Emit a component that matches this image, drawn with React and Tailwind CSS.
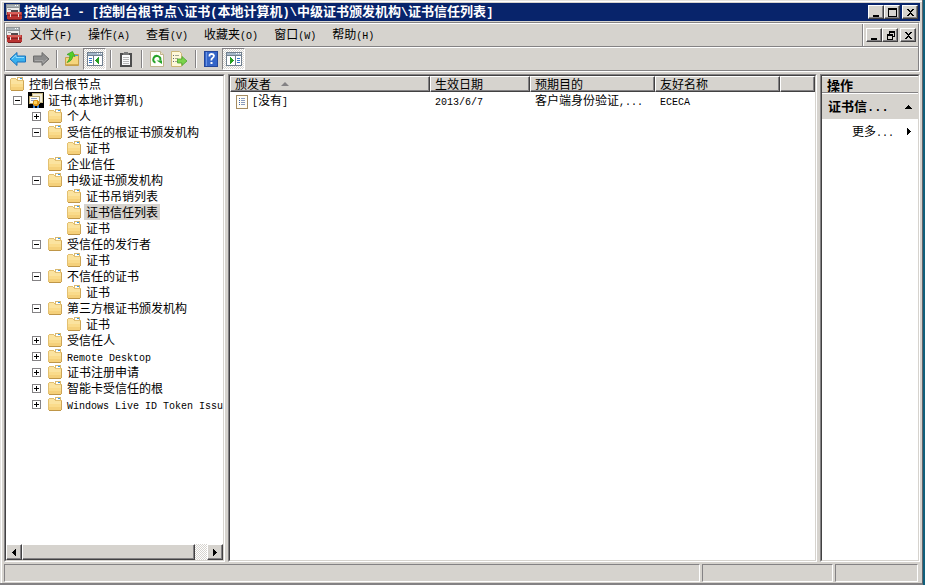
import React from "react";

// Latin runs are set in a half-width face so that two letters take one ideograph.
function Text({ children, latin = "text-[10px]" }) {
  const parts = children.split(/([\x20-\x7e]+)/).filter(Boolean);
  return parts.map((part, i) =>
    /^[\x20-\x7e]/.test(part) ? (
      <span key={i} className={`font-['Liberation_Mono',monospace] whitespace-pre ${latin}`}>
        {part}
      </span>
    ) : (
      <React.Fragment key={i}>{part}</React.Fragment>
    )
  );
}

function ConsoleIcon() {
  return (
    <svg width="16" height="16" viewBox="0 0 16 16" shapeRendering="crispEdges" aria-hidden="true">
      <rect x="0" y="0" width="14" height="11" fill="#8f9497" />
      <rect x="1" y="1" width="12" height="2" fill="#a9b2b7" />
      <rect x="9" y="1" width="1" height="1" fill="#fff" />
      <rect x="11" y="1" width="1" height="1" fill="#fff" />
      <rect x="1" y="4" width="12" height="6" fill="#eceded" />
      <rect x="2" y="5" width="3" height="1" fill="#a4a8ab" />
      <path d="M5 6h7v3h-2v-1h-3v1h-2z" fill="#55484c" />
      <rect x="1" y="8" width="15" height="7" fill="#b93432" />
      <rect x="2" y="8" width="13" height="2" fill="#d8605a" />
      <path d="M6 7h5v1h-5z" fill="#55484c" />
      <rect x="1" y="11" width="15" height="1" fill="#8a2426" />
      <rect x="4" y="10" width="1" height="3" fill="#e9dede" />
      <rect x="12" y="10" width="1" height="3" fill="#e9dede" />
      <rect x="2" y="15" width="13" height="1" fill="#7c1d20" />
    </svg>
  );
}

function FolderIcon() {
  return (
    <svg width="16" height="16" viewBox="0 0 16 16" shapeRendering="crispEdges" className="shrink-0" aria-hidden="true">
      <rect x="8" y="1" width="6" height="4" fill="#d9b96f" />
      <rect x="9" y="2" width="4" height="2" fill="#fff" />
      <rect x="11" y="2" width="2" height="1" fill="#3d9be0" />
      <path d="M1 3h1v-1h5v1h1v1h7v10h-1v1h-12v-1h-1z" fill="#e3c071" />
      <path d="M2 3h5v1h1v1h6v9h-12z" fill="#fbe39f" />
      <rect x="2" y="8" width="12" height="3" fill="#fadb8b" />
      <rect x="2" y="11" width="12" height="3" fill="#f5d07a" />
      <rect x="2" y="14" width="12" height="1" fill="#bf9648" />
      <rect x="14" y="5" width="1" height="9" fill="#cda556" />
    </svg>
  );
}

function CertificateIcon() {
  return (
    <svg width="16" height="16" viewBox="0 0 16 16" shapeRendering="crispEdges" className="shrink-0" aria-hidden="true">
      <rect width="16" height="16" fill="#000" />
      <rect x="4" y="1" width="11" height="10" fill="#c9ba86" />
      <rect x="5" y="2" width="9" height="8" fill="#f2ecd8" />
      <rect x="1" y="4" width="11" height="8" fill="#b9a66d" />
      <rect x="2" y="5" width="9" height="6" fill="#fffdf3" />
      <rect x="3" y="6" width="6" height="1" fill="#8a9ac0" />
      <rect x="3" y="8" width="3" height="1" fill="#8a9ac0" />
      <path d="M5 13h2v3h-2z M9 13h2v3h-2z" fill="#3276c9" />
      <path d="M6 8h4v1h1v4h-1v1h-4v-1h-1v-4h1z" fill="#dc961a" />
      <rect x="6" y="9" width="3" height="3" fill="#ffd45f" />
    </svg>
  );
}

function ListIcon() {
  return (
    <svg width="12" height="14" viewBox="0 0 12 14" shapeRendering="crispEdges" className="shrink-0" aria-hidden="true">
      <rect width="12" height="14" fill="#a58b61" />
      <rect x="1" y="1" width="10" height="12" fill="#fffdf6" />
      <path d="M3 3h1v1h-1z M3 5h1v1h-1z M3 7h1v1h-1z M3 9h1v1h-1z" fill="#4266a8" />
      <path d="M5 3h4v1h-4z M5 5h4v1h-4z M5 7h4v1h-4z M5 9h4v1h-4z" fill="#8a9bbd" />
    </svg>
  );
}

function ArrowIcon({ forward }) {
  return (
    <svg width="18" height="16" viewBox="0 0 18 16" className={forward ? "rotate-180" : ""} aria-hidden="true">
      <path
        d="M1 8 L8 1.500 V5 H16.500 V11 H8 V14.500 Z"
        fill={forward ? "#8c8c8c" : "#39b0ee"}
        stroke={forward ? "#6d6d6d" : "#1b73bd"}
      />
      <path d="M3 8 L7 4.200 V6.500 H15" fill="none" stroke={forward ? "#a6a6a6" : "#8edcff"} />
    </svg>
  );
}

function UpFolderIcon() {
  return (
    <svg width="16" height="16" viewBox="0 0 16 16" aria-hidden="true">
      <path d="M1.500 6.500h5l1-2h2V3.500h5v11h-13z" fill="#f6d57d" stroke="#c6a04b" />
      <path d="M11 4.500h3" stroke="#3d9be0" />
      <path d="M2 13.500h12" stroke="#d4aa52" />
      <path d="M3 3.500 L8.500 .5 L11 5.500 L8.800 5 C8.500 8.500 6.500 10.500 3 11.500 C5 9.500 6 7 5.800 4.300z" fill="#55cf28" stroke="#329c1c" strokeWidth=".7" />
    </svg>
  );
}

function PaneIcon({ flip }) {
  return (
    <svg width="16" height="16" viewBox="0 0 16 16" shapeRendering="crispEdges" aria-hidden="true">
      <rect x="0" y="1" width="16" height="14" fill="#71808f" />
      <rect x="1" y="2" width="14" height="2" fill="#a5b7c8" />
      <path d="M10 2h1v1h-1z M12 2h1v1h-1z M14 2h1v1h-1z" fill="#fff" />
      <rect x="1" y="5" width="14" height="9" fill="#fff" />
      <rect x={flip ? 9 : 6} y="5" width="1" height="9" fill="#71808f" />
      <path
        d={flip ? "M11 7h3v1h-3z M11 9h3v1h-3z M11 11h3v1h-3z" : "M2 7h3v1h-3z M2 9h3v1h-3z M2 11h3v1h-3z"}
        fill="#3574c8"
      />
      <path
        d={flip ? "M4 6h1v1h1v1h1v1h1v1h-1v1h-1v1h-1v1h-1z" : "M12 6h-1v1h-1v1h-1v1h-1v1h1v1h1v1h1v1h1z"}
        fill="#26a022"
      />
    </svg>
  );
}

function ClipboardIcon() {
  return (
    <svg width="14" height="16" viewBox="0 0 14 16" shapeRendering="crispEdges" aria-hidden="true">
      <rect x="1" y="2" width="12" height="14" fill="#4d4d4d" />
      <rect x="3" y="4" width="8" height="10" fill="#fafafa" />
      <path d="M5 1h4v1h1v2h-6v-2h1z" fill="#777" />
      <path d="M4 6h6v1h-6z M4 8h6v1h-6z M4 10h6v1h-6z M4 12h6v1h-6z" fill="#b7b7b7" />
    </svg>
  );
}

function RefreshIcon() {
  return (
    <svg width="14" height="16" viewBox="0 0 14 16" aria-hidden="true">
      <path d="M.5 .5h10l3 3v12h-13z" fill="#fffef9" stroke="#c1b48e" />
      <path d="M10.500 .5v3h3" fill="#eee4c6" stroke="#c1b48e" />
      <path d="M5.500 11.700A3.500 3.500 0 1 1 10.200 9.500" fill="none" stroke="#28a32a" strokeWidth="2" />
      <path d="M6.500 9.500h5.500v3.500z" fill="#28a32a" />
    </svg>
  );
}

function ExportIcon() {
  return (
    <svg width="17" height="16" viewBox="0 0 17 16" aria-hidden="true">
      <path d="M.5 .5h8l2 2v13h-10z" fill="#fff8d9" stroke="#cdb778" />
      <path d="M2 4.500h1M2 7.500h1M2 10.500h1" stroke="#5f6675" />
      <path d="M4 4.500h4M4 7.500h3M4 10.500h3" stroke="#a8a795" />
      <path d="M6.500 8h4.500V5.500l5 4.500-5 4.500V12H6.500z" fill="#7bd34b" stroke="#4aa52e" strokeWidth=".8" />
    </svg>
  );
}

function HelpIcon() {
  return (
    <svg width="14" height="16" viewBox="0 0 14 16" aria-hidden="true">
      <rect x=".5" y=".5" width="13" height="15" fill="#3465c8" stroke="#24469a" />
      <path d="M2.500 1v14" stroke="#6a93e4" />
      <path d="M5.500 5.500V4.500q0-1.500 2-1.500t2.500 1.500q0 1.500-1.500 2.500t-1 2.500" fill="none" stroke="#fff" strokeWidth="1.800" />
      <rect x="6.500" y="11" width="2" height="2" fill="#fff" />
    </svg>
  );
}

const glyphs = {
  minimize: "M2 8h6v2h-6z",
  maximize: "M1 1h9v9h-9z M2 3v6h7v-6z",
  restore: "M4 1h6v6h-2v-1h1v-3h-4v1h-1z M2 4h6v6h-6z M3 6v3h4v-3z",
  close: "M2 2h2v1h1v1h1v-1h1v-1h2v1h-1v1h-1v1h-1v1h1v1h1v1h1v1h-2v-1h-1v-1h-1v1h-1v1h-2v-1h1v-1h1v-1h1v-1h-1v-1h-1v-1h-1z",
};

const raised =
  "bg-[#d6d3ce] border border-t-white border-l-white border-r-[#424142] border-b-[#424142] shadow-[inset_-1px_-1px_0_#848284]";

function FrameButton({ kind, label }) {
  return (
    <button type="button" aria-label={label} className={`flex h-[14px] w-4 items-center justify-center ${raised}`}>
      <svg width="11" height="11" viewBox="0 0 11 11" shapeRendering="crispEdges" className="shrink-0" aria-hidden="true">
        <path d={glyphs[kind]} fillRule="evenodd" fill="#000" />
      </svg>
    </button>
  );
}

function FrameButtons({ middle, middleLabel }) {
  return (
    <div className="flex shrink-0">
      <FrameButton kind="minimize" label="最小化" />
      <FrameButton kind={middle} label={middleLabel} />
      <div className="ml-0.5 flex">
        <FrameButton kind="close" label="关闭" />
      </div>
    </div>
  );
}

function Separator() {
  return <div className="mr-0.5 ml-1 h-[18px] w-0.5 shrink-0 border-l border-l-[#848284] border-r border-r-white" />;
}

function ToolButton({ label, pressed, children }) {
  return (
    <button
      type="button"
      aria-label={label}
      className={
        pressed
          ? "flex h-[22px] w-[23px] items-center justify-center border border-t-[#848284] border-l-[#848284] border-r-white border-b-white bg-[repeating-conic-gradient(#ffffff_0_25%,#d6d3ce_0_50%)] bg-[length:2px_2px]"
          : "flex h-[22px] w-[23px] items-center justify-center"
      }
    >
      {children}
    </button>
  );
}

function Sunken({ className = "", children }) {
  return (
    <div className={`min-w-0 border border-t-[#848284] border-l-[#848284] border-r-white border-b-white ${className}`}>
      <div className="flex h-full flex-col overflow-hidden border border-t-[#424142] border-l-[#424142] border-r-[#d6d3ce] border-b-[#d6d3ce] bg-white">
        {children}
      </div>
    </div>
  );
}

const tree = [
  { level: 0, name: "控制台根节点" },
  { level: 1, name: "证书(本地计算机)", box: "-", cert: true },
  { level: 2, name: "个人", box: "+" },
  { level: 2, name: "受信任的根证书颁发机构", box: "-" },
  { level: 3, name: "证书" },
  { level: 2, name: "企业信任" },
  { level: 2, name: "中级证书颁发机构", box: "-" },
  { level: 3, name: "证书吊销列表" },
  { level: 3, name: "证书信任列表", selected: true },
  { level: 3, name: "证书" },
  { level: 2, name: "受信任的发行者", box: "-" },
  { level: 3, name: "证书" },
  { level: 2, name: "不信任的证书", box: "-" },
  { level: 3, name: "证书" },
  { level: 2, name: "第三方根证书颁发机构", box: "-" },
  { level: 3, name: "证书" },
  { level: 2, name: "受信任人", box: "+" },
  { level: 2, name: "Remote Desktop", box: "+" },
  { level: 2, name: "证书注册申请", box: "+" },
  { level: 2, name: "智能卡受信任的根", box: "+" },
  { level: 2, name: "Windows Live ID Token Issu", box: "+" },
];

const indents = ["pl-[3px]", "pl-[7px]", "pl-[26px]", "pl-[60px]"];

function ExpandBox({ kind }) {
  return (
    <button type="button" aria-label={kind === "+" ? "展开" : "折叠"} className="h-[9px] w-[9px]">
      <svg width="9" height="9" viewBox="0 0 9 9" shapeRendering="crispEdges" className="block" aria-hidden="true">
        <rect width="9" height="9" fill="#848284" />
        <rect x="1" y="1" width="7" height="7" fill="#fff" />
        <rect x="2" y="4" width="5" height="1" fill="#000" />
        {kind === "+" && <rect x="4" y="2" width="1" height="5" fill="#000" />}
      </svg>
    </button>
  );
}

function TreeRow({ node }) {
  return (
    <li className={`flex h-4 items-center ${indents[node.level]}`}>
      {(node.level === 1 || node.level === 2) && (
        <div className="flex w-[15px] shrink-0 items-center">{node.box && <ExpandBox kind={node.box} />}</div>
      )}
      {node.cert ? <CertificateIcon /> : <FolderIcon />}
      <span className={`ml-0.5 h-4 px-0.5 leading-4 whitespace-nowrap ${node.selected ? "bg-[#d6d3ce]" : ""}`}>
        <Text>{node.name}</Text>
      </span>
    </li>
  );
}

function ScrollButton({ label, d }) {
  return (
    <button type="button" aria-label={label} className={`flex h-4 w-4 shrink-0 items-center justify-center ${raised}`}>
      <svg width="4" height="7" viewBox="0 0 4 7" shapeRendering="crispEdges" aria-hidden="true">
        <path d={d} />
      </svg>
    </button>
  );
}

const rightTriangle = "M0 0h1v1h1v1h1v1h1v1h-1v1h-1v1h-1v1h-1z";
const leftTriangle = "M4 0h-1v1h-1v1h-1v1h-1v1h1v1h1v1h1v1h1z";

const columns = [
  { name: "颁发者", width: "w-[200px]", sorted: true },
  { name: "生效日期", width: "w-[100px]" },
  { name: "预期目的", width: "w-[125px]" },
  { name: "友好名称", width: "w-[125px]" },
];

const headCell =
  "h-4 border border-t-white border-l-white border-r-[#424142] border-b-[#424142] bg-[#d6d3ce] p-0 pl-1 text-left font-normal leading-[14px] shadow-[inset_-1px_-1px_0_#848284]";

const menus = ["文件(F)", "操作(A)", "查看(V)", "收藏夹(O)", "窗口(W)", "帮助(H)"];

export default function App() {
  return (
    <div className="flex h-screen bg-[#10607c] pr-0.5 font-['Noto_Sans_CJK_SC',sans-serif] text-[12px] text-black">
      <div className="flex min-w-0 flex-1 flex-col border-r border-b-2 border-r-[#63656b] border-b-[#848284] bg-[#d6d3ce] pr-0.5 pl-1 shadow-[inset_1px_1px_0_#e4e2de,inset_2px_2px_0_#ffffff]">
        <header className="mt-[3px] flex h-[18px] shrink-0 items-center bg-[#08246b] pr-0.5 pl-0.5">
          <ConsoleIcon />
          <h1 className="ml-0.5 min-w-0 flex-1 overflow-hidden text-[13px] leading-[18px] font-bold whitespace-nowrap text-white">
            <Text latin="text-[12px]">{"控制台1 - [控制台根节点\\证书(本地计算机)\\中级证书颁发机构\\证书信任列表]"}</Text>
          </h1>
          <FrameButtons middle="maximize" middleLabel="最大化" />
        </header>

        <div className="mt-px shrink-0 border border-t-[#848284] border-l-[#848284] border-r-white border-b-white">
          <div className="border border-t-white border-l-white border-r-[#848284] border-b-[#848284]">
            <div className="flex h-[22px] items-stretch">
              <div className="flex items-center">
                <ConsoleIcon />
              </div>
              <nav className="flex flex-1 items-center">
                {menus.map((m) => (
                  <button key={m} type="button" className="px-2 leading-5 whitespace-nowrap">
                    <Text>{m}</Text>
                  </button>
                ))}
              </nav>
              <div className="flex items-center border-l border-l-[#848284] pr-0.5">
                <div className="h-full border-l border-l-white pr-0.5" />
                <FrameButtons middle="restore" middleLabel="还原" />
              </div>
            </div>
            <div className="flex h-6 items-center border-t border-t-[#848284] shadow-[inset_0_1px_0_#ffffff]">
              <ToolButton label="后退"><ArrowIcon /></ToolButton>
              <ToolButton label="前进"><ArrowIcon forward /></ToolButton>
              <Separator />
              <ToolButton label="向上"><UpFolderIcon /></ToolButton>
              <ToolButton label="显示控制台树" pressed><PaneIcon /></ToolButton>
              <Separator />
              <ToolButton label="属性"><ClipboardIcon /></ToolButton>
              <Separator />
              <ToolButton label="刷新"><RefreshIcon /></ToolButton>
              <ToolButton label="导出列表"><ExportIcon /></ToolButton>
              <Separator />
              <ToolButton label="帮助"><HelpIcon /></ToolButton>
              <ToolButton label="显示操作窗格" pressed><PaneIcon flip /></ToolButton>
            </div>
          </div>
        </div>

        <main className="mt-0.5 grid min-h-0 flex-1 grid-cols-[221px_1fr_100px] gap-[3px]">
          <Sunken className="min-h-0">
            <ul className="min-h-0 flex-1 overflow-hidden">
              {tree.map((node, i) => (
                <TreeRow key={i} node={node} />
              ))}
            </ul>
            <div className="flex h-4 shrink-0 bg-[repeating-conic-gradient(#ffffff_0_25%,#d6d3ce_0_50%)] bg-[length:2px_2px]">
              <ScrollButton label="向左滚动" d={leftTriangle} />
              <div className={`mr-3 flex-1 ${raised}`} />
              <ScrollButton label="向右滚动" d={rightTriangle} />
            </div>
          </Sunken>

          <Sunken className="min-h-0">
            <table className="w-full table-fixed border-separate border-spacing-0">
              <thead>
                <tr>
                  {columns.map((c) => (
                    <th key={c.name} scope="col" className={`${headCell} ${c.width}`}>
                      <div className="flex h-[14px] items-center">
                        {c.name}
                        {c.sorted && (
                          <svg width="8" height="4" viewBox="0 0 8 4" className="ml-2.5" aria-hidden="true">
                            <path d="M0 4L4 0L8 4z" fill="#848284" />
                          </svg>
                        )}
                      </div>
                    </th>
                  ))}
                  <td className={headCell} />
                </tr>
              </thead>
              <tbody>
                <tr>
                  <td className="h-4 p-0 pl-1.5">
                    <div className="flex h-4 items-center gap-1 leading-4">
                      <ListIcon />
                      <span><Text>[没有]</Text></span>
                    </div>
                  </td>
                  <td className="h-4 p-0 pl-[5px] leading-4"><Text>2013/6/7</Text></td>
                  <td className="h-4 p-0 pl-[5px] leading-4"><Text>客户端身份验证,...</Text></td>
                  <td className="h-4 p-0 pl-[5px] leading-4"><Text>ECECA</Text></td>
                  <td />
                </tr>
              </tbody>
            </table>
          </Sunken>

          <Sunken className="min-h-0">
            <h2 className="h-[17px] border-t border-b border-t-white border-b-[#848284] bg-[#d6d3ce] pl-[5px] text-[13px] leading-4 font-bold">
              操作
            </h2>
            <button
              type="button"
              className="mt-px flex h-[25px] items-center justify-between bg-[#d6d3ce] pr-1.5 pl-1.5 text-[13px] font-bold whitespace-nowrap"
            >
              <span><Text latin="text-[12px]">证书信...</Text></span>
              <svg width="7" height="4" viewBox="0 0 7 4" shapeRendering="crispEdges" aria-hidden="true">
                <path d="M3 0h1v1h1v1h1v1h1v1h-7v-1h1v-1h1v-1h1z" />
              </svg>
            </button>
            <button type="button" className="flex h-6 items-center justify-between pr-[7px] pl-[30px] whitespace-nowrap">
              <span><Text>更多...</Text></span>
              <svg width="4" height="7" viewBox="0 0 4 7" shapeRendering="crispEdges" aria-hidden="true">
                <path d={rightTriangle} />
              </svg>
            </button>
          </Sunken>
        </main>

        <footer className="mt-0.5 mb-px flex h-[18px] shrink-0 gap-0.5 pr-0.5">
          <div className="flex-1 border border-t-[#848284] border-l-[#848284] border-r-white border-b-white" />
          <div className="w-[131px] border border-t-[#848284] border-l-[#848284] border-r-white border-b-white" />
          <div className="w-[83px] border border-t-[#848284] border-l-[#848284] border-r-white border-b-white" />
        </footer>
      </div>
    </div>
  );
}
